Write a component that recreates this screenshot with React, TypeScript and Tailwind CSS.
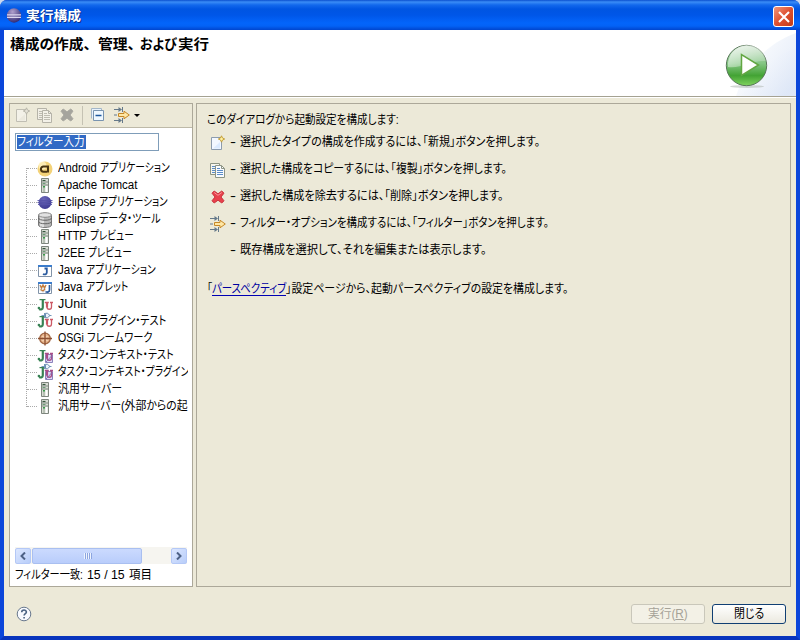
import { useLayoutEffect, useRef, type ReactNode } from 'react';

/** Condenses a line of text so that it fills the width given by its classes. */
function Fit({ className, children }: { className: string; children: ReactNode }) {
  const outer = useRef<HTMLSpanElement>(null);
  const inner = useRef<HTMLSpanElement>(null);
  useLayoutEffect(() => {
    if (outer.current && inner.current) {
      inner.current.style.transform = `scaleX(${outer.current.clientWidth / inner.current.offsetWidth})`;
    }
  }, []);
  return (
    <span ref={outer} className={`block shrink-0 whitespace-nowrap ${className}`}>
      <span ref={inner} className="inline-block origin-left [font-feature-settings:'palt']">{children}</span>
    </span>
  );
}

function Svg({ children, className = '' }: { children: ReactNode; className?: string }) {
  return <svg viewBox="0 0 16 16" className={`h-4 w-4 shrink-0 ${className}`} fill="none">{children}</svg>;
}

function NewIcon({ off = false }: { off?: boolean }) {
  return (
    <Svg>
      <path d="M1.500 2.500h10v12h-10z" fill={off ? '#f3f1e8' : '#f3f8ff'} stroke={off ? '#c0beb3' : '#8c9cae'} />
      <path d="M3 13.500h7V7z" fill={off ? '#ebe9de' : '#dcebff'} />
      <path d="M11.500 .8l1 2.200 2.200 1-2.200 1-1 2.200-1-2.200-2.200-1 2.200-1z" fill={off ? '#e4e2d6' : '#fff0a0'} stroke={off ? '#b4b2a6' : '#c09a30'} strokeWidth=".9" />
    </Svg>
  );
}

function CopyIcon({ off = false }: { off?: boolean }) {
  const line = off ? '#b5b3a8' : '#8d9485';
  const text = off ? '#bebcb1' : '#5b8cc8';
  return (
    <Svg>
      <path d="M.5 1.500h9v11h-9z" fill={off ? '#f1efe6' : '#f7f6ee'} stroke={line} />
      <path d="M2 4.500h3M2 6.500h3M2 8.500h3M2 10.500h3" stroke={text} />
      <path d="M5.500 3.500h6l3 3v9h-9z" fill={off ? '#f3f1e8' : '#f8fbff'} stroke={line} />
      <path d="M11.500 3.500v3h3" stroke={line} />
      <path d="M7 6.500h3M7 8.500h6M7 10.500h6M7 12.500h6" stroke={text} />
    </Svg>
  );
}

function DeleteIcon({ off = false }: { off?: boolean }) {
  return (
    <Svg>
      <path
        d="M2 4.200L4.200 2 8 4.800 11.800 2 14 4.200 11 8l3 3.800-2.200 2.200L8 11.200 4.200 14 2 11.800 5 8z"
        fill={off ? '#a5a49d' : '#e8414c'}
        stroke={off ? '#aaa9a1' : '#c9343e'}
        strokeLinejoin="round"
      />
      {!off && <path d="M4.200 3.500L8 6.300l3.800-2.800" stroke="#f8939a" />}
    </Svg>
  );
}

function FilterIcon() {
  return (
    <Svg>
      <path d="M0 2.500h7M0 13.500h7M8.500 0v5M8.500 11v5M0 8h3" stroke="#65798a" />
      <path d="M4.500 0l3.500 2.500L4.500 5zM4.500 11l3.500 2.500L4.500 16z" fill="#65798a" />
      <path d="M4.500 6.500H10V4.200l5.300 3.800-5.300 3.800V9.500H4.500z" fill="#ffe7a4" stroke="#c58727" />
    </Svg>
  );
}

function CollapseIcon() {
  return (
    <Svg>
      <path d="M1.500 11.500v-10h10v2" fill="#e8f2fc" stroke="#a3b6c8" />
      <path d="M3.500 3.500h10v10h-10z" fill="#eff8ff" stroke="#7994b0" />
      <path d="M5.500 8.500h6" stroke="#1d579d" strokeWidth="1.500" />
    </Svg>
  );
}

function AndroidIcon() {
  return (
    <Svg>
      <circle cx="8" cy="8" r="7.500" fill="#f3d278" />
      <circle cx="5.500" cy="4.800" r="4" fill="#fff3c4" opacity=".8" />
      <path d="M10 5.500H6.500a2.600 2.600 0 000 5.200H10M11 4.600v7" stroke="#4a3512" strokeWidth="2" />
    </Svg>
  );
}

function ServerIcon() {
  return (
    <Svg>
      <path d="M4.500 .5h7v14h-7z" fill="#d9ddd4" stroke="#7d857d" />
      <path d="M5 4h6M5 7h6" stroke="#7f8a80" />
      <path d="M5.500 2.500h3" stroke="#35543c" strokeWidth="1.200" />
      <path d="M5.500 5.500h3" stroke="#6c9a76" />
      <path d="M9.500 8v6" stroke="#fff" strokeWidth="2" />
      <path d="M7 8v6" stroke="#b7c0b4" strokeWidth="2" />
      <path d="M6 8.700h2" stroke="#3a9a4a" strokeWidth="1.500" />
    </Svg>
  );
}

function EclipseIcon({ title = false }: { title?: boolean }) {
  return (
    <Svg>
      <defs>
        <radialGradient id={title ? 'ecT' : 'ecA'} cx=".4" cy=".25" r=".8">
          <stop offset="0" stopColor={title ? '#b0a0cc' : '#6a66b8'} />
          <stop offset="1" stopColor={title ? '#2b2470' : '#3b3890'} />
        </radialGradient>
      </defs>
      <circle cx="8" cy="7.500" r={title ? 7.2 : 6.5} fill={title ? 'url(#ecT)' : 'url(#ecA)'} />
      {title ? (
        <path d="M1 6.800h14M1 9.300h14" stroke="#dcd6ee" strokeWidth="1.300" />
      ) : (
        <path d="M.5 5.500h15M.5 7.500h15M1 9.500h14" stroke="#5652a8" strokeWidth=".9" />
      )}
    </Svg>
  );
}

function DataIcon() {
  return (
    <Svg>
      <path d="M1.500 3v10c0 3.300 13 3.300 13 0V3z" fill="#b9b9b9" stroke="#777" />
      <path d="M4 4v10.500M6 5v10" stroke="#ededed" strokeWidth="1.500" />
      <path d="M1.500 6c0 3 13 3 13 0M1.500 9.500c0 3 13 3 13 0" stroke="#666" />
      <ellipse cx="8" cy="3" rx="6.500" ry="2.300" fill="#e2e2e2" stroke="#888" />
    </Svg>
  );
}

function JavaIcon({ applet = false }: { applet?: boolean }) {
  return (
    <Svg>
      <path d="M1.500 2.500h13v11h-13z" fill="#fff" stroke="#8193a8" />
      <path d="M1 3h14" stroke="#3b7ccc" strokeWidth="2" />
      {applet ? (
        <>
          <path d="M2 5h7v6l-3 2-4-3z" fill="#e3ecf5" />
          <path d="M3 5l1.500 3L6 5l1.500 3L9 5M3.500 9.500L6 11l2-2" stroke="#c37c3b" strokeWidth="1.300" />
          <path d="M12.500 5v5c0 2-2 2.500-4 1.800" stroke="#2a5b9f" strokeWidth="1.700" />
        </>
      ) : (
        <path d="M7.500 5.500h2.300v4c0 2-2.300 2.300-3.800 1.500" stroke="#2a5b9f" strokeWidth="1.800" />
      )}
    </Svg>
  );
}

function JUnitIcon({ plug = false, task = false }: { plug?: boolean; task?: boolean }) {
  const u = task ? '#a84d88' : '#cc5966';
  return (
    <Svg className="overflow-visible">
      {task && <path d="M8.500 6.500h7v8h-7z" fill="#dedcf5" stroke="#8c82bd" />}
      <path d="M2.500 2.600h6" stroke="#388254" strokeWidth="1.200" />
      <path d="M5.800 3v7.200c0 2.200-1.800 2.800-3.600 1.800" stroke="#388254" strokeWidth="2.200" />
      <circle cx="1.900" cy="11" r="1.300" fill="#388254" />
      <path d="M7.800 5.500h4M13 5.500h3M14.500 5.500v4.500c0 3-4.500 3-4.500 0" stroke={u} strokeWidth="1.300" />
      <path d="M10 5.500v5" stroke={u} strokeWidth="2.200" />
      {task && <path d="M9 14l6-6.500" stroke="#8173b6" />}
      {plug && (
        <>
          <path d="M7.500-1v5M4.500 1.500h3M12.500 1.500h2" stroke="#7396ba" />
          <path d="M8.500-.7h2L13 1.500 10.500 3.700h-2z" fill="#eaf3fb" stroke="#5d83aa" strokeWidth=".9" />
        </>
      )}
    </Svg>
  );
}

function OsgiIcon() {
  return (
    <Svg>
      <circle cx="8" cy="7.500" r="5.300" fill="#eab88e" stroke="#a16846" strokeWidth="1.300" />
      <path d="M5.500 5l5 5M10.500 5l-5 5" stroke="#fff0df" strokeWidth=".8" />
      <path d="M8 .5v14M1 7.500h14" stroke="#8c4f31" strokeWidth="1.300" />
    </Svg>
  );
}

type Run = [text: string, width: string];

const configs: { runs: Run[]; icon: ReactNode }[] = [
  { runs: [['Android', 'w-[42px]'], ['アプリケーション', 'w-[70px]']], icon: <AndroidIcon /> },
  { runs: [['Apache Tomcat', 'w-[80px]']], icon: <ServerIcon /> },
  { runs: [['Eclipse', 'w-[41px]'], ['アプリケーション', 'w-[69px]']], icon: <EclipseIcon /> },
  { runs: [['Eclipse', 'w-[41px]'], ['データ・ツール', 'w-[62px]']], icon: <DataIcon /> },
  { runs: [['HTTP', 'w-[32px]'], ['プレビュー', 'w-[44px]']], icon: <ServerIcon /> },
  { runs: [['J2EE', 'w-[30px]'], ['プレビュー', 'w-[44px]']], icon: <ServerIcon /> },
  { runs: [['Java', 'w-[28px]'], ['アプリケーション', 'w-[70px]']], icon: <JavaIcon /> },
  { runs: [['Java', 'w-[28px]'], ['アプレット', 'w-[42px]']], icon: <JavaIcon applet /> },
  { runs: [['JUnit', 'w-[28px]']], icon: <JUnitIcon /> },
  { runs: [['JUnit', 'w-[32px]'], ['プラグイン・テスト', 'w-[76px]']], icon: <JUnitIcon plug /> },
  { runs: [['OSGi', 'w-[29px]'], ['フレームワーク', 'w-[66px]']], icon: <OsgiIcon /> },
  { runs: [['タスク・コンテキスト・テスト', 'w-[116px]']], icon: <JUnitIcon task /> },
  { runs: [['タスク・コンテキスト・プラグイン', 'w-[131px]']], icon: <JUnitIcon plug task /> },
  { runs: [['汎用サーバー', 'w-[64px]']], icon: <ServerIcon /> },
  { runs: [['汎用サーバー', 'w-[63px]'], ['(外部からの起', 'w-[67px]']], icon: <ServerIcon /> },
];

const hints: { text: string; width: string; icon: ReactNode }[] = [
  { text: '選択したタイプの構成を作成するには、「新規」ボタンを押します。', width: 'w-[300px]', icon: <NewIcon /> },
  { text: '選択した構成をコピーするには、「複製」ボタンを押します。', width: 'w-[267px]', icon: <CopyIcon /> },
  { text: '選択した構成を除去するには、「削除」ボタンを押します。', width: 'w-[264px]', icon: <DeleteIcon /> },
  { text: 'フィルター・オプションを構成するには、「フィルター」ボタンを押します。', width: 'w-[309px]', icon: <FilterIcon /> },
  { text: '既存構成を選択して、それを編集または表示します。', width: 'w-[247px]', icon: null },
];

function ScrollButton({ left = false }: { left?: boolean }) {
  return (
    <div className="flex h-[16px] w-[16px] shrink-0 items-center justify-center rounded-[2px] border border-[#b4c8f6] bg-linear-to-br from-[#dce7ff] to-[#b8cdf9]">
      <svg viewBox="0 0 8 8" className="h-2 w-2" fill="none">
        <path d={left ? 'M6 .5L2.500 4 6 7.500' : 'M2 .5L5.500 4 2 7.500'} stroke="#4d6185" strokeWidth="2" />
      </svg>
    </div>
  );
}

function TitleBar() {
  return (
    <header className="flex h-[30px] shrink-0 items-center pr-[6px] pl-[6px] [background-image:linear-gradient(#0b4fcf_0,#3a8cf6_2px,#1268ec_5px,#0055e2_9px,#0056e8_15px,#0365fb_23px,#0362f6_26px,#0045ce_30px)]">
      <div className="mt-[2px] flex"><EclipseIcon title /></div>
      <Fit className="mt-[2px] ml-[4px] w-[55px] text-[13px] leading-[18px] font-bold text-white [text-shadow:1px_1px_#0a2f8c]">実行構成</Fit>
      <div className="mt-[3px] ml-auto flex h-[21px] w-[21px] items-center justify-center rounded-[3px] border border-white bg-linear-to-br from-[#ef9479] via-[#de5030] to-[#c13b16]">
        <svg viewBox="0 0 12 12" className="h-3 w-3"><path d="M1 1l10 10M11 1L1 11" stroke="#fff" strokeWidth="2.100" /></svg>
      </div>
    </header>
  );
}

function RunBanner() {
  return (
    <svg viewBox="0 0 90 66" className="h-[66px] w-[90px] shrink-0">
      <defs>
        <linearGradient id="sweep" x1="0" y1="0" x2="1" y2=".7"><stop offset=".15" stopColor="#fff" /><stop offset="1" stopColor="#dbe5f6" /></linearGradient>
        <linearGradient id="ball" x1="0" y1="0" x2="0" y2="1"><stop offset="0" stopColor="#c4dec4" /><stop offset=".45" stopColor="#83c583" /><stop offset=".75" stopColor="#43a334" /><stop offset="1" stopColor="#7fd25e" /></linearGradient>
        <linearGradient id="shine" x1="0" y1="0" x2="1" y2="1"><stop offset="0" stopColor="#fff" stopOpacity=".75" /><stop offset="1" stopColor="#fff" stopOpacity=".1" /></linearGradient>
      </defs>
      <path d="M30 66C37 45 54 16 90 3v63z" fill="url(#sweep)" opacity=".75" />
      <path d="M35 66C48 44 64 27 90 18v48z" fill="url(#sweep)" opacity=".6" />
      <ellipse cx="41" cy="56.500" rx="17" ry="1.500" fill="#b6bdb8" opacity=".6" />
      <circle cx="40.500" cy="35.500" r="20.200" fill="url(#ball)" stroke="#59775a" />
      <path d="M22 37C21 10 57 8 60 31c-15-1-25 8-38 6z" fill="url(#shine)" />
      <path d="M35.500 24.500v21l17-10.500z" fill="#fff" stroke="#62a642" strokeWidth="1.500" />
    </svg>
  );
}

function branchClass(i: number) {
  if (i === 0) return 'h-[9px] w-px self-end border-l border-dotted border-[#aaa]';
  if (i === configs.length - 1) return 'h-[9px] w-px self-start border-l border-dotted border-[#aaa]';
  return 'h-full w-px border-l border-dotted border-[#aaa]';
}

export default function App() {
  return (
    <div className="h-[640px] w-[800px] bg-[#c9d8ee] font-['Liberation_Sans','Noto_Sans_CJK_JP',sans-serif] text-[12px] leading-[17px] text-black">
      <div className="flex h-full flex-col overflow-hidden rounded-t-[7px] bg-[#0640d8]">
        <TitleBar />
        <main className="flex flex-1 flex-col border-x-4 border-b-4 border-t-0 border-[#0b46da] border-b-[#0834bd] bg-[#ece9d8]">
          <section className="flex h-[67px] shrink-0 justify-between border-b border-[#a5a292] bg-white">
            <h1 className="mt-[5px] ml-[6px] flex text-[14px] leading-[18px] font-bold">
              <Fit className="w-[81px]">構成の作成、</Fit>
              <Fit className="ml-[7px] w-[37px]">管理、</Fit>
              <Fit className="ml-[5px] w-[37px]">および</Fit>
              <Fit className="ml-[1px] w-[31px]">実行</Fit>
            </h1>
            <RunBanner />
          </section>
          <div className="h-[1px] shrink-0 bg-white" />
          <section className="mt-[5px] ml-[5px] flex h-[484px] shrink-0 gap-[3px]">
            <aside className="flex w-[184px] shrink-0 flex-col border border-[#aca899] bg-white">
              <div className="flex h-[24px] shrink-0 items-center border-b border-[#bdb9a8] bg-[#ece9d8] pb-px pl-[5px]">
                <NewIcon off />
                <div className="ml-[6px] flex"><CopyIcon off /></div>
                <div className="ml-[6px] flex"><DeleteIcon off /></div>
                <div className="ml-[7px] h-[19px] w-px bg-[#c5c2b3]" />
                <div className="ml-[7px] flex"><CollapseIcon /></div>
                <div className="ml-[8px] flex"><FilterIcon /></div>
                <div className="ml-[4px] border-x-[3px] border-t-[3px] border-x-transparent border-t-black" />
              </div>
              <div className="mt-[5px] ml-[5px] flex h-[18px] w-[144px] shrink-0 items-center border border-[#7f9db9] pl-px">
                <div className="flex h-[14px] w-[69px] items-center bg-[#316ac5] text-white"><Fit className="w-[68px]">フィルター入力</Fit></div>
              </div>
              <ul className="mt-[9px] mr-[4px] ml-[16px] flex flex-col overflow-hidden">
                {configs.map((c, i) => (
                  <li key={i} className="flex h-[17px] shrink-0 items-center">
                    <span className={branchClass(i)} />
                    <span className="w-[10px] shrink-0 border-t border-dotted border-[#aaa]" />
                    <span className="flex">{c.icon}</span>
                    <span className="ml-[5px] flex">
                      {c.runs.map(([text, width], n) => (
                        <Fit key={n} className={width}>{text}{c.runs.length > 1 && n === 0 && i < 14 ? '\u00a0' : ''}</Fit>
                      ))}
                    </span>
                  </li>
                ))}
              </ul>
              <div className="mt-auto ml-[5px] flex h-[17px] w-[172px] shrink-0 items-center bg-[#f6f5f0]">
                <ScrollButton left />
                <div className="ml-px flex h-[16px] w-[110px] items-center justify-center gap-px rounded-[2px] border border-[#a9bff0] bg-linear-to-b from-[#cbdafe] to-[#b9cdfb]">
                  {[0, 1, 2, 3].map((n) => <span key={n} className="h-[6px] w-px bg-[#eef4fe] shadow-[1px_0_#8ca5e0]" />)}
                </div>
                <div className="ml-auto"><ScrollButton /></div>
              </div>
              <p className="mt-[3px] mb-[2px] ml-[5px] flex">
                <Fit className="w-[68px]">フィルター一致:</Fit>
                <Fit className="ml-[4px] w-[38px]">15 / 15</Fit>
                <Fit className="ml-[4px] w-[23px]">項目</Fit>
              </p>
            </aside>
            <article className="w-[595px] shrink-0 border border-[#aca899] pt-[8px] pl-[10px]">
              <Fit className="w-[192px]">このダイアログから起動設定を構成します:</Fit>
              <ul>
                {hints.map((h) => (
                  <li key={h.text} className="flex h-[27px] items-center">
                    <span className="ml-[3px] flex h-4 w-4 shrink-0">{h.icon}</span>
                    <Fit className="mr-[4px] ml-[4px] w-[6px]">-</Fit>
                    <Fit className={h.width}>{h.text}</Fit>
                  </li>
                ))}
              </ul>
              <p className="mt-[17px] flex">
                <Fit className="w-[5px]">「</Fit>
                <Fit className="h-[15px] w-[74px] border-b border-[#0000b4] text-[#0000a0]">パースペクティブ</Fit>
                <Fit className="w-[282px]">」設定ページから、起動パースペクティブの設定を構成します。</Fit>
              </p>
            </article>
          </section>
          <footer className="flex flex-1 items-center pt-[5px] pr-[10px] pl-[12px]">
            <svg viewBox="0 0 16 16" className="h-4 w-4"><circle cx="8" cy="8" r="6.800" fill="#f8faff" stroke="#68788d" /><path d="M5.700 6.300c0-3 4.700-3 4.700-.2 0 1.600-2.300 1.600-2.300 3.500M8.100 11v1.600" stroke="#4c6484" strokeWidth="1.600" fill="none" /></svg>
            <button className="ml-auto flex h-[20px] w-[74px] items-center justify-center rounded-[3px] border border-[#c9c7ba] bg-[#f3f1e6] text-[#a5a297]"><Fit className="w-[40px]">実行(<u>R</u>)</Fit></button>
            <button className="ml-[7px] flex h-[20px] w-[74px] items-center justify-center rounded-[3px] border border-[#103f73] bg-linear-to-b from-white to-[#ebe9df]"><Fit className="w-[30px]">閉じる</Fit></button>
          </footer>
        </main>
      </div>
    </div>
  );
}
